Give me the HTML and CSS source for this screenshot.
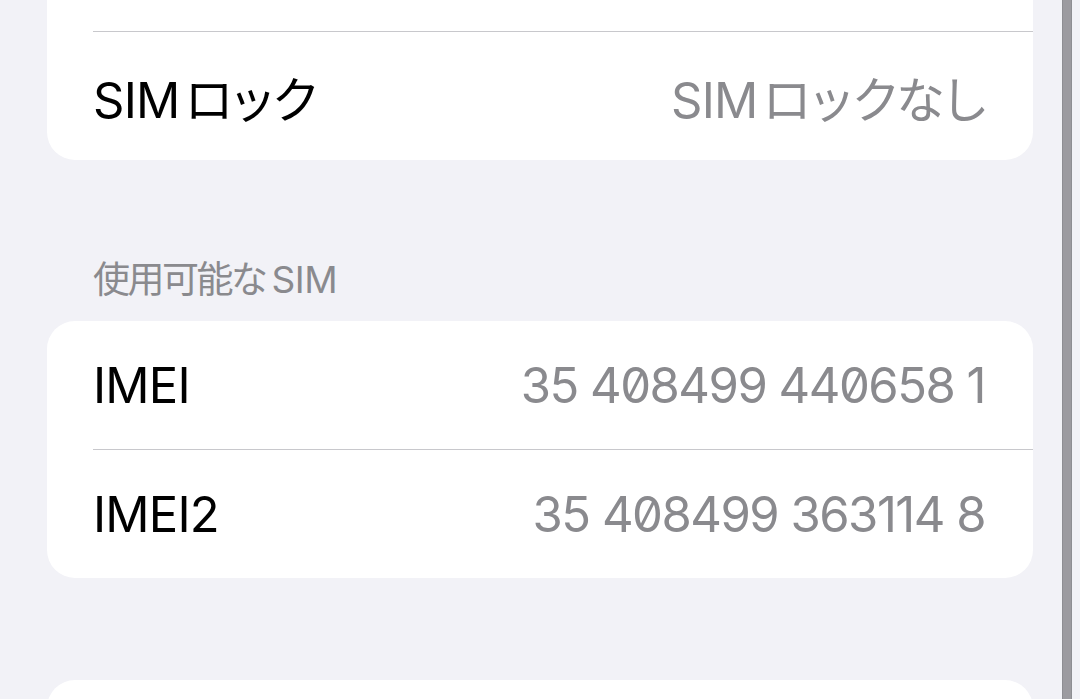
FILE: index.html
```html
<!DOCTYPE html>
<html lang="ja">
<head>
    <meta charset="UTF-8">
    <meta name="viewport" content="width=device-width, initial-scale=1.0">
    <title>SIM</title>
    <link rel="stylesheet" href="styles.css">
</head>
<body>
    <div class="screen">
        <div class="group first">
            <div class="row"></div>
            <div class="row">
                <span class="label">SIM<span class="ja">ロック</span></span>
                <span class="value">SIM<span class="ja">ロックなし</span></span>
            </div>
        </div>

        <div class="section-header"><span class="ja">使用可能な</span><span class="latin">SIM</span></div>
        <div class="group">
            <div class="row">
                <span class="label">IMEI</span>
                <span class="value number">35 408499 440658 1</span>
            </div>
            <div class="row">
                <span class="label">IMEI2</span>
                <span class="value number">35 408499 363114 8</span>
            </div>
        </div>

        <div class="group last">
            <div class="row"></div>
        </div>
    </div>

    <div class="scroll-edge"></div>
</body>
</html>
```

FILE: styles.css
```css
body {
    margin: 0;
    background: #f2f2f7;
    font-family: 'Inter', 'Noto Sans CJK JP', sans-serif;
    color: #000;
    overflow: hidden;
    height: 699px;
}

.screen {
    padding: 0 47px;
}

.group {
    background: #ffffff;
    border-radius: 28px;
    overflow: hidden;
}

/* list is scrolled, the first group starts above the top */
.group.first {
    margin-top: -97px;
}

.group.last {
    margin-top: 102px;
    height: 160px;
}

.row {
    height: 128px;
    margin-left: 46px;
    padding-right: 48px;
    display: flex;
    align-items: center;
    justify-content: space-between;
    font-size: 49px;
    letter-spacing: -0.8px;
}

.row + .row {
    border-top: 1px solid #c8c8cc;
}

.label {
    color: #000;
}

.value {
    color: #8a8a8e;
}

/* kana are set tighter than full width */
.ja {
    margin-left: 5px;
    letter-spacing: -5.5px;
}

.value .ja {
    letter-spacing: -4.5px;
}

.number {
    font-variant-numeric: slashed-zero;
    letter-spacing: -1.5px;
}

.section-header {
    margin: 97px 0 19px 46px;
    font-size: 37px;
    line-height: 45px;
    color: #8a8a8e;
}

.section-header .ja {
    margin-left: 0;
    letter-spacing: -2.5px;
}

.section-header .latin {
    margin-left: 6px;
    letter-spacing: -0.5px;
}

.scroll-edge {
    position: fixed;
    top: 0;
    bottom: 0;
    left: 1062px;
    width: 8px;
    background: #9c9ba0;
    border-left: 1px solid #8e8e93;
    border-right: 1px solid #8e8e93;
}
```
